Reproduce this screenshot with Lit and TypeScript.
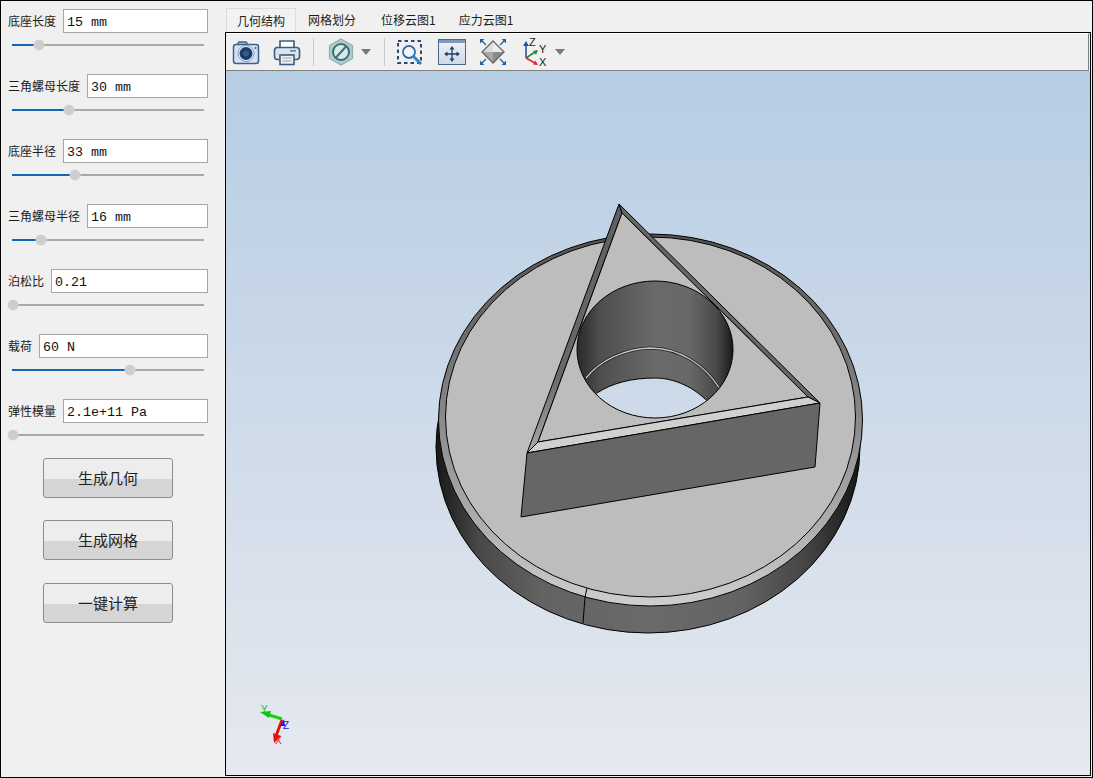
import { LitElement, css, html, svg } from "lit";
import { customElement } from "lit/decorators.js";

const FIELDS = [
  { label: "底座长度", value: "15 mm", thumb: 39 },
  { label: "三角螺母长度", value: "30 mm", thumb: 69 },
  { label: "底座半径", value: "33 mm", thumb: 75 },
  { label: "三角螺母半径", value: "16 mm", thumb: 41 },
  { label: "泊松比", value: "0.21", thumb: 13 },
  { label: "载荷", value: "60 N", thumb: 130 },
  { label: "弹性模量", value: "2.1e+11 Pa", thumb: 13 },
];
const TABS = ["几何结构", "网格划分", "位移云图1", "应力云图1"];
const ACTIONS = ["生成几何", "生成网格", "一键计算"];
const TRACK_X = 12;

const camera = svg`
  <path d="M6 7V5.5q0-1.5 1.5-1.5h6q1.5 0 1.5 1.5V7" fill="#b9cfe6" stroke="#3c5f8c" stroke-width="1.4"/>
  <rect x="1.5" y="6.5" width="25" height="19" rx="2.5" fill="#d3e2f3" stroke="#3c5f8c" stroke-width="1.5"/>
  <circle cx="14" cy="15.5" r="8" fill="#e9f0f8" stroke="#7d9cc0"/>
  <circle cx="14" cy="15.5" r="6.5" fill="#1d3a68"/>
  <circle cx="14" cy="15.5" r="3" fill="#34598f"/>
  <circle cx="23.5" cy="10" r="1" fill="#3c5f8c"/>`;

const printer = svg`
  <path d="M7 10V3h14v7" fill="#fff" stroke="#3f5d7a" stroke-width="1.6"/>
  <rect x="1.5" y="9.5" width="25" height="12" rx="3" fill="#dbe5ee" stroke="#3f5d7a" stroke-width="1.6"/>
  <rect x="17" y="12" width="6" height="1.6" fill="#6d8297"/>
  <rect x="7" y="17" width="14" height="9.5" fill="#eef2f5" stroke="#3f5d7a" stroke-width="1.6"/>
  <path d="M9.5 20h9M9.5 23h9" stroke="#8da0b2" stroke-width="1.2"/>`;

const noEntry = svg`
  <polygon points="14,1 25.5,7.5 25.5,20.5 14,27 2.5,20.5 2.5,7.5" fill="#b3cbcd" stroke="#8fb0b3" stroke-width="1.2"/>
  <circle cx="14" cy="14" r="8" fill="#dfe8e9" stroke="#35707a" stroke-width="2"/>
  <path d="M9 19.5 19 8.5" stroke="#35707a" stroke-width="2"/>`;

const zoomBox = svg`
  <rect x="2" y="3" width="23" height="22" fill="none" stroke="#2b4a78" stroke-width="2" stroke-dasharray="3.5 3"/>
  <circle cx="13" cy="14" r="6" fill="#eef4fa" stroke="#3b6d9f" stroke-width="1.8"/>
  <path d="M17.5 18.5 25 26" stroke="#2f86c8" stroke-width="3"/>`;

const fitAll = svg`
  <defs><linearGradient id="fit" x1="0" y1="0" x2="0" y2="1">
    <stop offset="0" stop-color="#f0f3f8"/><stop offset="1" stop-color="#ced8e6"/>
  </linearGradient></defs>
  <rect x="0.5" y="1.5" width="27" height="25" fill="url(#fit)" stroke="#47678f"/>
  <rect x="1" y="2" width="26" height="3" fill="#7f9aba"/>
  <path d="M14 10v12M8 16h12" stroke="#20406a" stroke-width="1.3"/>
  <path d="M14 8l2.500 3.500h-5zM14 24l2.500-3.500h-5zM6 16l3.500-2.500v5zM22 16l-3.500-2.500v5z" fill="#20406a"/>`;

const viewDiamond = svg`
  <polygon points="14,3 3,14 14,14" fill="#dcdcdc"/>
  <polygon points="14,3 25,14 14,14" fill="#ececec"/>
  <polygon points="3,14 14,14 14,25" fill="#a8a8a8"/>
  <polygon points="25,14 14,14 14,25" fill="#8c8c8c"/>
  <polygon points="14,3 25,14 14,25 3,14" fill="none" stroke="#666" stroke-width="1.3"/>
  <path d="M3 3l4 4M25 3l-4 4M3 25l4-4M25 25l-4-4" stroke="#2a5f9e" stroke-width="1.4"/>
  <path d="M1 1h4.500l-4.500 4.500zM27 1h-4.500l4.500 4.500zM1 27h4.500l-4.500-4.500zM27 27h-4.500l4.500-4.500z" fill="#2a5f9e"/>`;

const axes = svg`
  <path d="M4 20V7" stroke="#2456a8" stroke-width="1.6"/>
  <path d="M4 3l3 5h-6z" fill="#2456a8"/>
  <path d="M4 20 13 14" stroke="#1d8f3a" stroke-width="1.6"/>
  <path d="M16 12l-2 5-3-4z" fill="#1d8f3a"/>
  <path d="M4 20 13 25" stroke="#e0262b" stroke-width="1.6"/>
  <path d="M16 27l-5-.5 2.500-4z" fill="#e0262b"/>
  <text x="7" y="8" class="axis-label">Z</text>
  <text x="17" y="15" class="axis-label">Y</text>
  <text x="17" y="28" class="axis-label">X</text>`;

@customElement("app-root")
export class AppRoot extends LitElement {
  static styles = css`
    :host {
      display: flex;
      box-sizing: border-box;
      width: 1093px;
      height: 778px;
      border: 1px solid #000;
      background: #f0f0f0;
      color: #1c1c1c;
      font-family: "Noto Sans CJK SC", "Liberation Sans", sans-serif;
      font-size: 12px;
      overflow: hidden;
    }
    .side {
      box-sizing: border-box;
      width: 224px;
      flex: none;
      padding: 8px 17px 0 7px;
    }
    .fields {
      display: flex;
      flex-direction: column;
      gap: 24px;
    }
    .field {
      height: 41px;
    }
    .field-top {
      display: flex;
      align-items: center;
      gap: 7px;
      height: 24px;
    }
    .field-top label {
      white-space: nowrap;
      line-height: 24px;
    }
    .value {
      flex: 1;
      box-sizing: border-box;
      height: 24px;
      padding: 1px 3px 0;
      border: 1px solid #a6a6a6;
      background: #fff;
      font-family: "Liberation Mono", monospace;
      font-size: 13.33px;
      line-height: 24px;
      color: #111;
      overflow: hidden;
    }
    .slider {
      position: relative;
      box-sizing: border-box;
      height: 2px;
      width: 192px;
      margin: 11px 0 0 4px;
      background: #a9a9a9;
    }
    .slider .fill {
      height: 2px;
      background: #1565b5;
    }
    .slider .thumb {
      position: absolute;
      top: -4px;
      width: 10px;
      height: 10px;
      border-radius: 50%;
      background: #cecece;
      box-shadow: 0 0 0 0.5px #d8d8d8;
    }
    .actions {
      display: flex;
      flex-direction: column;
      gap: 22px;
      margin: 18px 0 0 35px;
    }
    .btn {
      box-sizing: border-box;
      width: 130px;
      height: 40px;
      border: 1px solid #8c8c8c;
      border-radius: 3px;
      background: linear-gradient(#ededed 0, #ededed 52%, #d5d5d5 52%, #d5d5d5 100%);
      font-size: 15px;
      line-height: 38px;
      text-align: center;
      color: #222;
    }
    .btn:last-child {
      margin-top: 1px;
    }
    .main {
      display: flex;
      flex-direction: column;
      width: 866px;
      flex: none;
    }
    .tabs {
      display: flex;
      align-items: flex-end;
      box-sizing: border-box;
      height: 31px;
      flex: none;
    }
    .tab {
      box-sizing: border-box;
      height: 24px;
      padding: 0 12px;
      line-height: 24px;
      white-space: nowrap;
    }
    .tab:nth-child(2) {
      margin-right: 1px;
    }
    .tab:nth-child(3) {
      margin-right: -1px;
    }
    .tab.active {
      padding: 0 10px;
      margin-left: 1px;
      border: 1px solid #dcdcdc;
      border-bottom: none;
      background: #f2f2f2;
      line-height: 23px;
    }
    .pane {
      box-sizing: border-box;
      height: 744px;
      border: 1px solid #000;
      display: flex;
      flex-direction: column;
    }
    .toolbar {
      display: flex;
      align-items: center;
      box-sizing: border-box;
      height: 38px;
      flex: none;
      margin-right: 1px;
      padding-left: 6px;
      border-top: 1px solid #fff;
      border-right: 1px solid #808080;
      border-bottom: 1px solid #808080;
      background: #f0f0f0;
    }
    .toolbar svg {
      width: 28px;
      height: 28px;
      flex: none;
      overflow: visible;
    }
    .axis-label {
      font-family: "Liberation Sans", sans-serif;
      font-size: 11px;
      fill: #222;
    }
    .ic {
      margin-left: 13px;
    }
    .sep {
      width: 1px;
      height: 28px;
      background: #c9c9c9;
      flex: none;
      margin-left: 12px;
    }
    .drop {
      width: 0;
      height: 0;
      flex: none;
      margin-left: 6px;
      border-left: 5px solid transparent;
      border-right: 5px solid transparent;
      border-top: 6px solid #7a7a7a;
    }
    .viewer {
      flex: 1;
      min-height: 0;
      background: linear-gradient(#b7cde4, #e6e9ef);
    }
    .viewer svg {
      display: block;
      width: 864px;
      height: 704px;
    }
    .triad text {
      font-family: "Liberation Sans", sans-serif;
      font-size: 10px;
    }
  `;

  private renderField(f: { label: string; value: string; thumb: number }) {
    const pos = f.thumb - TRACK_X;
    return html`
      <div class="field">
        <div class="field-top">
          <label>${f.label}</label>
          <div class="value">${f.value}</div>
        </div>
        <div class="slider">
          <div class="fill" style="width:${Math.max(pos, 0)}px"></div>
          <div class="thumb" style="left:${pos - 5}px"></div>
        </div>
      </div>
    `;
  }

  private renderModel() {
    return html`
      <svg viewBox="226 71 864 704">
        <defs>
          <linearGradient id="bg" gradientUnits="userSpaceOnUse" x1="0" y1="71" x2="0" y2="775">
            <stop offset="0" stop-color="#b7cde4" /><stop offset="1" stop-color="#e6e9ef" />
          </linearGradient>
          <linearGradient id="side" gradientUnits="userSpaceOnUse" x1="436" y1="0" x2="860" y2="0">
            <stop offset="0" stop-color="#181818" /><stop offset="0.1" stop-color="#484848" />
            <stop offset="0.25" stop-color="#626262" /><stop offset="0.5" stop-color="#6a6a6a" />
            <stop offset="0.72" stop-color="#636363" /><stop offset="0.88" stop-color="#434343" />
            <stop offset="1" stop-color="#161616" />
          </linearGradient>
          <linearGradient id="rim" gradientUnits="userSpaceOnUse" x1="0" y1="234" x2="0" y2="606">
            <stop offset="0" stop-color="#555" /><stop offset="0.25" stop-color="#6a6a6a" />
            <stop offset="0.55" stop-color="#919191" /><stop offset="0.8" stop-color="#b0b0b0" />
            <stop offset="1" stop-color="#cfcfcf" />
          </linearGradient>
          <linearGradient id="strip" gradientUnits="userSpaceOnUse" x1="0" y1="204" x2="0" y2="453">
            <stop offset="0" stop-color="#5f5f5f" /><stop offset="0.7" stop-color="#6a6a6a" />
            <stop offset="1" stop-color="#ababab" />
          </linearGradient>
          <linearGradient id="bore" gradientUnits="userSpaceOnUse" x1="577" y1="0" x2="733" y2="0">
            <stop offset="0" stop-color="#2a2a2a" /><stop offset="0.15" stop-color="#4e4e4e" />
            <stop offset="0.5" stop-color="#6a6a6a" /><stop offset="0.72" stop-color="#686868" />
            <stop offset="0.9" stop-color="#484848" /><stop offset="1" stop-color="#181818" />
          </linearGradient>
          <clipPath id="hole"><ellipse cx="655" cy="349.500" rx="78" ry="68.500" /></clipPath>
        </defs>

        <ellipse cx="648" cy="447" rx="212" ry="186" fill="url(#side)" stroke="#000" />
        <ellipse cx="650.500" cy="420" rx="212" ry="186" fill="url(#rim)" stroke="#000" />
        <path d="M585 597 583 623" stroke="#000" fill="none" />
        <path d="M587 588 585 597" stroke="#000" fill="none" />
        <ellipse cx="650.500" cy="417" rx="205" ry="180" fill="#bdbdbd" stroke="#000" />

        <polygon points="619,204 527,453 538,442 622,213" fill="url(#strip)" stroke="#000" />
        <polygon points="619,204 820,403 808,397 622,213" fill="#666" stroke="#000" />
        <polygon points="622,213 808,397 538,442" fill="#bdbdbd" stroke="#000" />
        <polygon points="538,442 808,397 820,403 527,453" fill="#d0d0d0" stroke="#000" />
        <polygon points="527,453 820,403 815,467 521,517" fill="#666" stroke="#000" />

        <ellipse cx="655" cy="349.500" rx="78" ry="68.500" fill="url(#bore)" />
        <g clip-path="url(#hole)">
          <path d="M597 393C612 383 632 378 655 378C675 378 695 388 708 402L720 430H590Z" fill="url(#bg)" />
          <path d="M597 393C612 383 632 378 655 378C675 378 695 388 708 402" fill="none" stroke="#000" />
          <path d="M586 378C600 360 625 349 650 348C680 348 705 365 720 389" fill="none" stroke="#222" stroke-width="2.800" />
          <path d="M586 378C600 360 625 349 650 348C680 348 705 365 720 389" fill="none" stroke="#c4c4c4" stroke-width="1.300" />
        </g>
        <ellipse cx="655" cy="349.500" rx="78" ry="68.500" fill="none" stroke="#000" />

        <g class="triad">
          <path d="M282 719 266 714" stroke="#12d312" stroke-width="3" />
          <path d="M260 712 271 711 269 718Z" fill="#12c212" />
          <path d="M282 720 276 736" stroke="#e01010" stroke-width="3" />
          <path d="M274 743 273 733 281 736Z" fill="#f00808" />
          <path d="M280 726 284 719 285 726Z" fill="#1818e0" />
          <text x="261" y="713" fill="#12c212">Y</text>
          <text x="283" y="729" fill="#1818e0">Z</text>
          <text x="275" y="744" fill="#e01818">X</text>
        </g>
      </svg>
    `;
  }

  render() {
    return html`
      <div class="side">
        <div class="fields">${FIELDS.map((f) => this.renderField(f))}</div>
        <div class="actions">${ACTIONS.map((a) => html`<div class="btn">${a}</div>`)}</div>
      </div>
      <div class="main">
        <div class="tabs">
          ${TABS.map((t, i) => html`<div class="tab ${i === 0 ? "active" : ""}">${t}</div>`)}
        </div>
        <div class="pane">
          <div class="toolbar">
            <svg viewBox="0 0 28 28">${camera}</svg>
            <svg class="ic" viewBox="0 0 28 28">${printer}</svg>
            <div class="sep"></div>
            <svg class="ic" viewBox="0 0 28 28">${noEntry}</svg>
            <div class="drop"></div>
            <div class="sep" style="margin-left:13px"></div>
            <svg class="ic" style="margin-left:11px" viewBox="0 0 28 28">${zoomBox}</svg>
            <svg class="ic" style="margin-left:14px" viewBox="0 0 28 28">${fitAll}</svg>
            <svg class="ic" viewBox="0 0 28 28">${viewDiamond}</svg>
            <svg class="ic" style="margin-left:15px" viewBox="0 0 28 28">${axes}</svg>
            <div class="drop" style="margin-left:5px"></div>
          </div>
          <div class="viewer">${this.renderModel()}</div>
        </div>
      </div>
    `;
  }
}
